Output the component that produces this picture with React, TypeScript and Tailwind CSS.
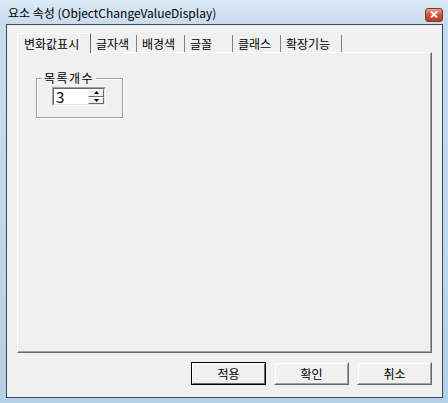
import React from "react";

const font = { fontFamily: '"Noto Sans CJK KR", "Noto Sans", sans-serif' };

const tabs = [
  { label: "글자색", w: "w-[46px]" },
  { label: "배경색", w: "w-[48px]" },
  { label: "글꼴", w: "w-[48px]" },
  { label: "클래스", w: "w-[48px]" },
  { label: "확장기능", w: "w-[61px]" },
];

const Arrow = ({ up }: { up?: boolean }) => (
  <svg width="5" height="3" viewBox="0 0 5 3" className="block">
    {up ? <path d="M2.5 0 L5 3 L0 3 Z" fill="#000" /> : <path d="M0 0 L5 0 L2.5 3 Z" fill="#000" />}
  </svg>
);

const Button = ({ label, isDefault }: { label: string; isDefault?: boolean }) => (
  <button
    className={`w-[75px] h-[23px] bg-[#f0f0f0] text-[12px] text-black flex items-center justify-center ${
      isDefault ? "border border-black" : "border border-[#f0f0f0] border-r-[#696969] border-b-[#696969]"
    }`}
    style={font}
  >
    <span
      className={`w-full h-full flex items-center justify-center border ${
        isDefault
          ? "border-white border-r-[#696969] border-b-[#696969]"
          : "border-white border-r-[#a0a0a0] border-b-[#a0a0a0]"
      }`}
    >
      {label}
    </span>
  </button>
);

export default function App() {
  return (
    <div className="w-[448px] h-[403px] flex flex-col bg-gradient-to-b from-[#c9dcef] via-[#c3d8ec] to-[#b4cfe6] overflow-hidden" style={font}>
      {/* title bar */}
      <div className="h-[24px] flex items-center justify-between pl-[8px] pr-[5px] bg-gradient-to-b from-[#dce9f6] to-[#c8dbee]">
        <span className="text-[12px] leading-none text-black pt-[1px]">요소 속성 (ObjectChangeValueDisplay)</span>
        <div className="w-[18px] h-[14px] mt-[5px] rounded-[3px] border border-[#7a3a30] bg-gradient-to-b from-[#e8a090] via-[#d0503a] to-[#c23a24] flex items-center justify-center">
          <svg width="8" height="7" viewBox="0 0 8 7">
            <path d="M1 0.5 L7 6.5 M7 0.5 L1 6.5" stroke="#fff" strokeWidth="1.8" />
          </svg>
        </div>
      </div>

      {/* client */}
      <div className="ml-[6px] mr-[5px] h-[374px] border border-[#38495a] bg-[#f0f0f0] flex flex-col pt-[8px] px-[10px]">
        {/* tab strip */}
        <div className="h-[19px] flex items-end relative z-10">
          <div className="w-[74px] h-[20px] -mb-[1px] bg-[#f0f0f0] border-t border-l border-white border-r border-r-[#696969] text-[12px] pl-[6px] flex items-center">
            변화값표시
          </div>
          {tabs.map((t) => (
            <div
              key={t.label}
              className={`${t.w} h-[17px] border-r border-[#808080] text-[12px] pl-[5px] flex items-center`}
            >
              {t.label}
            </div>
          ))}
        </div>

        {/* tab panel */}
        <div className="h-[301px] border border-white border-r-[#696969] border-b-[#696969] flex flex-col">
          <div className="flex-1 border-r border-b border-[#a0a0a0] pt-[25px] pl-[18px]">
            <div className="relative w-[87px] h-[40px] border border-[#a0a0a0] shadow-[inset_1px_1px_0_#fff,1px_1px_0_#fff]">
              <span className="absolute -top-[9px] left-[5px] px-[2px] bg-[#f0f0f0] text-[12px] leading-[16px] tracking-[1.5px]">목록개수</span>
              <div className="mt-[8px] ml-[15px] w-[54px] h-[19px] flex border border-[#a0a0a0] border-r-white border-b-white">
                <div className="flex-1 flex border border-[#696969] border-r-[#e3e3e3] border-b-[#e3e3e3] bg-white">
                  <span className="flex-1 text-[15px] leading-[15px] pl-[2px]">3</span>
                  <div className="w-[16px] flex flex-col">
                    <div className="flex-1 bg-[#f0f0f0] border border-white border-r-[#696969] border-b-[#696969] flex items-center justify-center">
                      <Arrow up />
                    </div>
                    <div className="flex-1 bg-[#f0f0f0] border border-white border-r-[#696969] border-b-[#696969] flex items-center justify-center">
                      <Arrow />
                    </div>
                  </div>
                </div>
              </div>
            </div>
          </div>
        </div>

        {/* buttons */}
        <div className="flex justify-end gap-[8px] pt-[9px]">
          <Button label="적용" isDefault />
          <Button label="확인" />
          <Button label="취소" />
        </div>
      </div>
    </div>
  );
}
